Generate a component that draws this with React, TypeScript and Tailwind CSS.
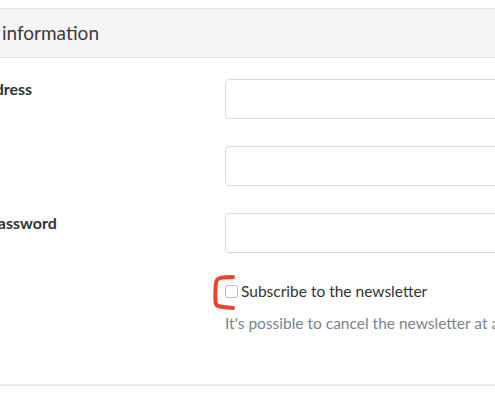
import React from 'react';

const fields = [
  { label: 'Email address', type: 'email' },
  { label: 'Name', type: 'text' },
  { label: 'Repeat password', type: 'password' },
];

export default function App() {
  return (
    <div
      className="relative h-[400px] w-[495px] overflow-hidden bg-white text-[#333]"
      style={{ fontFamily: 'Lato, "Noto Sans", sans-serif' }}
    >
      <div className="-ml-[80px] mt-[8px] w-[640px] border-t border-[#e3e3e3]">
        {/* Panel heading */}
        <div className="flex h-[49px] items-center border-b border-[#e3e3e3] bg-[#f5f5f5] px-[8px] text-[19px] text-[#3a3a3a]">
          Account information
        </div>

        {/* Panel body */}
        <div className="px-[15px] pt-[21px]">
          <div className="flex flex-col gap-[27px]">
            {fields.map((f) => (
              <div key={f.label} className="flex">
                <label className="w-[290px] shrink-0 text-[16px] font-bold leading-5 text-[#333]">
                  {f.label}
                </label>
                <input
                  type={f.type}
                  className="h-[40px] w-[320px] rounded-[4px] border border-[#d9dbe0] bg-white px-3 outline-none"
                />
              </div>
            ))}
          </div>

          <div className="flex pt-[28px]">
            <div className="w-[290px] shrink-0" />
            <div className="flex flex-col">
              <label className="flex items-center gap-[3px] text-[15.5px] leading-5 text-[#333]">
                <span className="inline-block h-[13px] w-[13px] rounded-[3px] border border-[#b9bcc2] bg-white" />
                Subscribe to the newsletter
              </label>
              <p className="mt-[12px] whitespace-nowrap text-[15.5px] leading-5 text-[#7b8390]">
                It's possible to cancel the newsletter at any time.
              </p>
            </div>
          </div>
        </div>

        <div className="mt-[51px] border-t-2 border-[#ebebeb]" />
      </div>

      {/* Annotation bracket */}
      <svg className="absolute left-[210px] top-[273px]" width="30" height="40" viewBox="0 0 30 40">
        <path
          d="M23 4 C16 4 9 4 7 7 C5 10 5 28 6 31 C7 34 14 34 23 35"
          fill="none"
          stroke="#e8452c"
          strokeWidth="4"
          strokeLinecap="round"
        />
      </svg>
    </div>
  );
}
